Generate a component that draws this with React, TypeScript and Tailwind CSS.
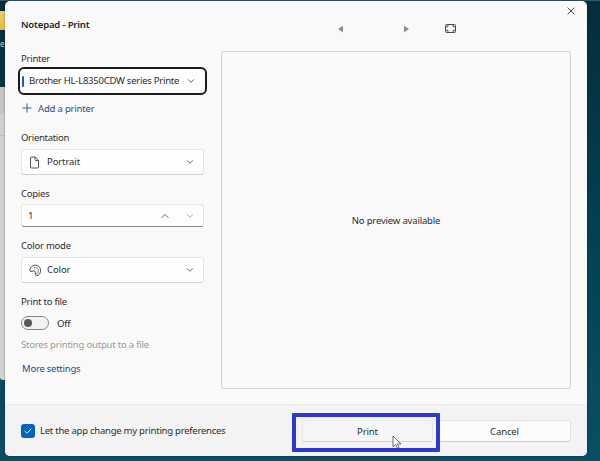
import React from "react";

function Chevron({ up = false, color = "#555" }: { up?: boolean; color?: string }) {
  return (
    <svg className="shrink-0" width="8" height="6" viewBox="0 0 8 6" fill="none" stroke={color} strokeWidth="0.9">
      <path d={up ? "M0.6 4.8 4 1.4l3.4 3.4" : "M1.1 1.4 4 4.3l2.9-2.9"} />
    </svg>
  );
}

function Label({ className, children }: { className: string; children: React.ReactNode }) {
  return <div className={"h-4 whitespace-nowrap " + className}>{children}</div>;
}

function Select({ icon, text }: { icon: React.ReactNode; text: string }) {
  return (
    <div className="flex h-[26px] w-[183px] items-center rounded-[3px] border border-[#e5e5e5] border-b-[#cfcfcf] bg-[#fefefe] pr-[9px] pl-[7px]">
      <span className="flex w-[18px] shrink-0">{icon}</span>
      <span className="-mt-px flex-1 leading-4 tracking-[-0.1px]">{text}</span>
      <Chevron />
    </div>
  );
}

function PageIcon() {
  return (
    <svg width="12" height="13" viewBox="0 0 12 13" fill="none" stroke="#3d3d3d" strokeWidth="0.9">
      <path d="M2.500 1h3.700L9.500 4.300V11a1 1 0 0 1-1 1h-6a1 1 0 0 1-1-1V2a1 1 0 0 1 1-1Z" />
      <path d="M6 1v2.700a.9.9 0 0 0 .9.9h2.600" />
    </svg>
  );
}

function PaletteIcon() {
  return (
    <svg width="13" height="13" viewBox="0 0 13 13" fill="none" stroke="#3d3d3d" strokeWidth="0.9">
      <path d="M.8 6C1 3.1 3.800.9 6.800 1.200c3 .3 5 2.700 4.800 5.600-.2 2.600-1.700 5-3.800 4.900-1.700-.1-1.500-1.600-1.500-2.800 0-1.600-.8-2.600-2.200-1.800C2.700 7.800.7 8 .8 6Z" />
      <g fill="#3d3d3d" stroke="none">
        <circle cx="5.7" cy="3.6" r=".65" />
        <circle cx="8" cy="4" r=".65" />
        <circle cx="9.3" cy="5.9" r=".65" />
        <circle cx="9.1" cy="8" r=".65" />
        <circle cx="7.9" cy="9.7" r=".6" />
      </g>
    </svg>
  );
}

function Backdrop() {
  return (
    <div className="absolute inset-0 bg-linear-to-b from-[#052d3b] via-[#034052] to-[#0b4f65]">
      <div className="h-px bg-[#355765]" />
      <div className="mt-[10px] h-[19px] w-[6px] bg-linear-to-b from-[#edcb68] to-[#e8ba45]" />
      <div className="h-[57px] w-[5px] pt-[8px] text-[8px] leading-[12px] text-[#c9d1d5]">e</div>
      <div className="h-[293px] w-[10px] rounded-bl-[3px] border-r border-[#bababa] bg-[#d0d0d0]">
        <div className="h-[27px] border-b border-[#c9c9c9] bg-[#c5c5c5]" />
        <div className="h-[22px] border-b border-[#c0c0c0]" />
      </div>
    </div>
  );
}

export default function App() {
  return (
    <div className="relative h-[461px] w-[600px] overflow-hidden pt-px pl-[5px] font-['Noto_Sans','Open_Sans',sans-serif] text-[9.5px] leading-[18px] tracking-[-0.24px] text-[#2d2d2d]">
      <Backdrop />
      <main className="relative flex h-[455px] w-[582px] flex-col overflow-hidden rounded-[5px] bg-[#f9f9f9] shadow-[0_0_2px_rgba(0,0,0,0.5)]">
        <div className="flex h-[404px] border-b border-[#ececec] pt-px pl-4">
          <section className="w-[183px]">
            <h1 className="mt-[14px] h-4 font-semibold tracking-[-0.16px] text-[#1f1f1f]">Notepad - Print</h1>
            <Label className="mt-[18px]">Printer</Label>
            <div className="mt-px -ml-[3px] flex h-[28px] w-[189px] items-center rounded-[6px] border-2 border-[#1c1c1c] bg-[#fefefe] pr-[10px] pl-[2px]">
              <i className="h-[11px] w-[2px] shrink-0 rounded-full bg-[#1260b5]" />
              <span className="ml-[5px] flex-1 overflow-hidden whitespace-nowrap">Brother HL-L8350CDW series Printe</span>
              <Chevron />
            </div>
            <div className="mt-[5px] flex h-4 items-center pl-[1px] text-[#1b4f94]">
              <svg width="10" height="10" viewBox="0 0 10 10" stroke="#1b4f94" strokeWidth="0.9">
                <path d="M5 .5v9M.5 5h9" />
              </svg>
              <span className="mt-px ml-[6px] tracking-[-0.18px]">Add a printer</span>
            </div>
            <Label className="mt-[13px] mb-1 tracking-[-0.3px]">Orientation</Label>
            <Select icon={<PageIcon />} text="Portrait" />
            <Label className="mt-[10px] mb-[3px]">Copies</Label>
            <div className="flex h-[23px] w-[183px] items-center rounded-[3px] border border-[#e5e5e5] border-b-[#868686] bg-[#fefefe] pr-[9px] pl-[6px]">
              <span className="flex-1">1</span>
              <Chevron up color="#555" />
              <span className="ml-[17px]"><Chevron color="#a0a0a0" /></span>
            </div>
            <Label className="mt-[10px] mb-1">Color mode</Label>
            <Select icon={<PaletteIcon />} text="Color" />
            <Label className="mt-[10px]">Print to file</Label>
            <div className="mt-[6px] flex h-4 items-center">
              <span className="flex h-[14px] w-[28px] items-center rounded-full border border-[#858585] bg-[#f3f3f3] pl-[2px]">
                <i className="size-[8px] rounded-full bg-[#595959]" />
              </span>
              <span className="mt-px ml-2">Off</span>
            </div>
            <Label className="mt-[5px] tracking-[-0.2px] text-[#999]">Stores printing output to a file</Label>
            <Label className="mt-[8px] pl-px text-[#1b4f94]">More settings</Label>
          </section>
          <section className="ml-[17px] w-[350px]">
            <div className="flex h-[49px] items-start">
              <svg className="mt-[23px] ml-[116px] shrink-0" width="7" height="8" viewBox="0 0 7 8" fill="#8b8b8b">
                <path d="M6 .8v6.400L1 4Z" />
              </svg>
              <svg className="mt-[23px] ml-[59px] shrink-0" width="7" height="8" viewBox="0 0 7 8" fill="#8b8b8b">
                <path d="M1 .8v6.400L6 4Z" />
              </svg>
              <svg className="mt-[22px] ml-[35px] shrink-0" width="11" height="9" viewBox="0 0 11 9" fill="none" stroke="#4b4b4b">
                <rect x=".5" y=".5" width="10" height="8" rx="1" />
                <path fill="#4b4b4b" stroke="none" d="M1.500 1.500h2.700L1.500 3.900ZM9.500 1.500v2.400L6.800 1.500ZM9.500 7.500H6.800L9.500 5.100ZM1.500 7.500V5.100l2.700 2.400Z" />
              </svg>
              <svg className="mt-[5px] ml-[111px] shrink-0" width="8" height="8" viewBox="0 0 8 8" stroke="#333" strokeWidth=".9">
                <path d="m.6.6 6.800 6.800M7.400.6.6 7.400" />
              </svg>
            </div>
            <div className="flex h-[338px] items-center justify-center rounded-[3px] border border-[#cfcfcf] pt-px tracking-[-0.17px]">No preview available</div>
          </section>
        </div>
        <footer className="flex flex-1 items-start bg-[#f3f3f3] pl-4">
          <span className="mt-[19px] flex size-[14px] items-center justify-center rounded-[3px] bg-[#0563bd]">
            <svg width="8" height="6" viewBox="0 0 8 6" fill="none" stroke="white" strokeWidth=".9"><path d="m.7 3 2.200 2.200L7.300.8" /></svg>
          </span>
          <span className="mt-[17px] ml-[5px] w-[252px] whitespace-nowrap">Let the app change my printing preferences</span>
          <div className="relative z-10 mt-[8px] h-[39px] w-[148px] rounded-[1px] border-4 border-[#2b39d1] bg-[#f3f3f3] px-[5px] pt-[3px]">
            <button className="ml-px block h-[22px] w-[131px] rounded-[3px] border border-[#e7e7e7] border-b-[#d1d1d1] bg-[#f6f6f6] pt-px leading-5 tracking-[-0.1px]">Print</button>
            <svg className="absolute top-[18px] left-[96px]" width="10" height="15" viewBox="0 0 10 15" fill="white" stroke="#444" strokeWidth=".8">
              <path d="M1 1v10.700l2.600-2.300 1.800 4 1.700-.8-1.700-3.700H9Z" />
            </svg>
          </div>
          <button className="mt-[15px] -ml-[2px] h-[22px] w-[133px] rounded-[3px] border border-[#e3e3e3] border-b-[#cdcdcd] bg-[#fcfcfc] pt-px leading-5 tracking-[-0.1px]">Cancel</button>
        </footer>
      </main>
    </div>
  );
}
